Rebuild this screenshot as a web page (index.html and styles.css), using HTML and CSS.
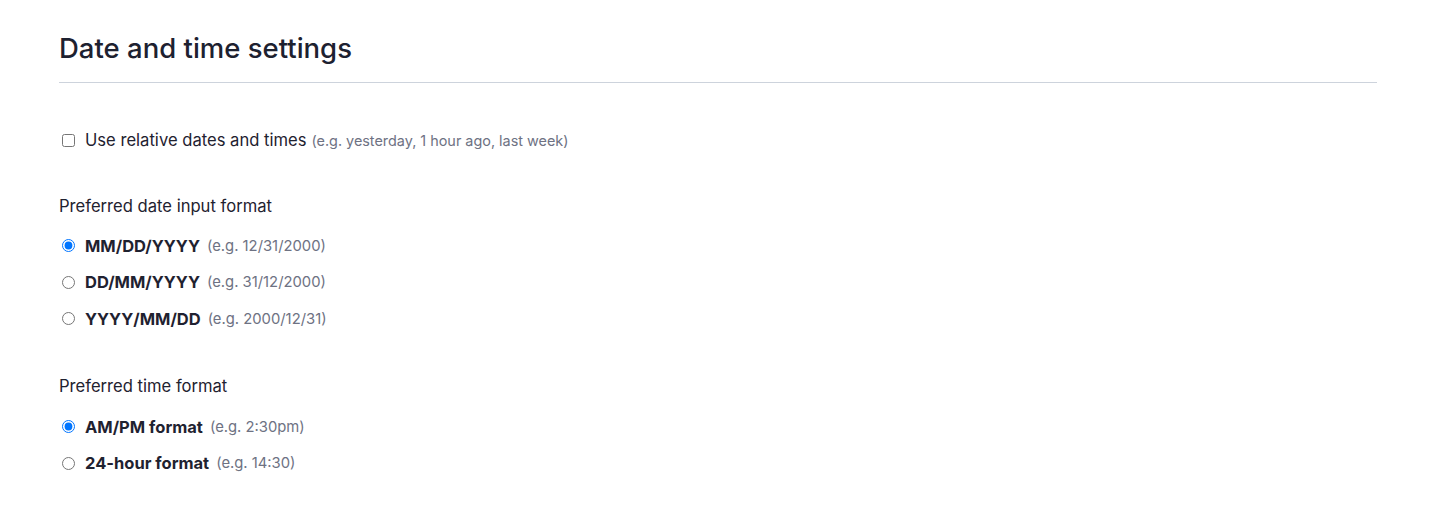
FILE: index.html
```html
<!DOCTYPE html>
<html>
<head>
<meta charset="utf-8">
<link rel="stylesheet" href="styles.css">
</head>
<body>
<main class="page">
  <h1 class="title">Date and time settings</h1>
  <div class="section">
    <label class="check-row">
      <input type="checkbox">
      <span class="label-text">Use relative dates and times</span>
      <span class="hint hint-small">(e.g. yesterday, 1 hour ago, last week)</span>
    </label>
  </div>
  <div class="group">
    <div class="group-title">Preferred date input format</div>
    <label class="radio-row"><input type="radio" name="date" checked><b class="opt">MM/DD/YYYY</b><span class="hint">(e.g. 12/31/2000)</span></label>
    <label class="radio-row"><input type="radio" name="date"><b class="opt">DD/MM/YYYY</b><span class="hint">(e.g. 31/12/2000)</span></label>
    <label class="radio-row"><input type="radio" name="date"><b class="opt">YYYY/MM/DD</b><span class="hint">(e.g. 2000/12/31)</span></label>
  </div>
  <div class="group group-time">
    <div class="group-title">Preferred time format</div>
    <label class="radio-row"><input type="radio" name="time" checked><b class="opt">AM/PM format</b><span class="hint">(e.g. 2:30pm)</span></label>
    <label class="radio-row"><input type="radio" name="time"><b class="opt">24-hour format</b><span class="hint">(e.g. 14:30)</span></label>
  </div>
</main>
</body>
</html>
```
FILE: styles.css
```css
html, body {
  margin: 0;
  padding: 0;
  background: #ffffff;
}
body {
  font-family: Inter, "Noto Sans", sans-serif;
  color: #1f2230;
}
.page {
  padding: 28px 60px 0 59px;
}
.title {
  margin: 0;
  font-size: 27.5px;
  font-weight: 500;
  line-height: 40px;
  padding-bottom: 14px;
  border-bottom: 1px solid #cdd3dc;
  color: #1d2130;
}
.section {
  padding-top: 45px;
}
.check-row, .radio-row {
  display: flex;
  align-items: center;
  font-size: 16.6px;
  line-height: 24px;
  height: 24px;
}
.check-row input, .radio-row input {
  margin: 0 10px 0 3px;
  width: 13px;
  height: 13px;
}
.label-text {
  margin-right: 5px;
}
.hint {
  color: #6e7283;
  font-size: 14.8px;
}
.hint-small {
  font-size: 14.4px;
  padding-top: 1px;
}
.opt {
  font-weight: 700;
  font-size: 16.5px;
  margin-right: 7px;
}
.group {
  display: flex;
  flex-direction: column;
  gap: 12.5px;
  padding-top: 42px;
}
.group-title {
  font-size: 16.6px;
  line-height: 24px;
  margin-bottom: 3px;
}
.group-time {
  padding-top: 43px;
}
.group-time .group-title {
  margin-bottom: 4.5px;
}
```
